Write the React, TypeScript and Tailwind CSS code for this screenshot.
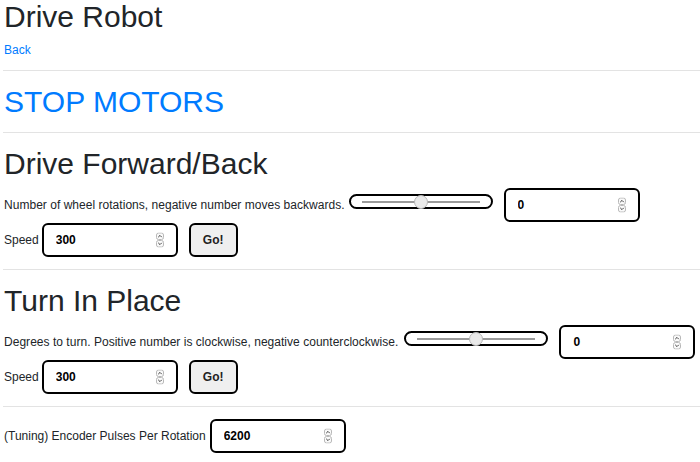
import { useState } from "react";

const sliderCls =
  "appearance-none bg-white w-[144px] h-[15px] border-2 border-black rounded-full px-[11px] box-border cursor-pointer " +
  "[&::-webkit-slider-runnable-track]:h-[2px] [&::-webkit-slider-runnable-track]:bg-[#9a9a9a] " +
  "[&::-webkit-slider-thumb]:appearance-none [&::-webkit-slider-thumb]:w-[14px] [&::-webkit-slider-thumb]:h-[14px] " +
  "[&::-webkit-slider-thumb]:rounded-full [&::-webkit-slider-thumb]:bg-[#e9e9e9] [&::-webkit-slider-thumb]:border " +
  "[&::-webkit-slider-thumb]:border-[#b5b5b5] [&::-webkit-slider-thumb]:mt-[-6px]";

const numCls =
  "w-[136px] h-[34px] border-2 border-black rounded-md bg-white pl-3 pr-3 text-[12px] font-bold text-black outline-none " +
  "[&::-webkit-inner-spin-button]:appearance-none";

const goCls =
  "w-[49px] h-[34px] border-2 border-black rounded-md bg-[#efefef] text-[12px] font-bold text-[#222]";

function Spinner() {
  return (
    <svg className="absolute right-[14px] top-1/2 -translate-y-1/2 pointer-events-none" width="8" height="15" viewBox="0 0 8 15">
      <rect x="0.5" y="0.5" width="7" height="6.5" rx="2" fill="#fafafa" stroke="#b8b8b8" />
      <rect x="0.5" y="8" width="7" height="6.5" rx="2" fill="#fafafa" stroke="#b8b8b8" />
      <path d="M2.2 4.7 L4 2.9 L5.8 4.7" fill="none" stroke="#444" strokeWidth="1" />
      <path d="M2.2 10.3 L4 12.1 L5.8 10.3" fill="none" stroke="#444" strokeWidth="1" />
    </svg>
  );
}

function NumberBox({ value, defaultValue, onChange, className = "" }: {
  value?: number;
  defaultValue?: number;
  onChange?: (v: number) => void;
  className?: string;
}) {
  return (
    <span className={"relative inline-flex " + className}>
      <input
        type="number"
        value={value}
        defaultValue={defaultValue}
        onChange={onChange ? (e) => onChange(Number(e.target.value)) : undefined}
        className={numCls}
      />
      <Spinner />
    </span>
  );
}

function Rule() {
  return <div className="border-t border-[#e3e3e3] -ml-px" />;
}

function Heading({ children, className = "" }: { children: React.ReactNode; className?: string }) {
  return <h2 className={"text-[30px] leading-[34px] font-normal text-[#212529] " + className}>{children}</h2>;
}

function DriveSection({ title, label, sliderMin, sliderMax, sliderGap }: {
  title: string;
  label: string;
  sliderMin: number;
  sliderMax: number;
  sliderGap: string;
}) {
  const [amount, setAmount] = useState(0);
  return (
    <div>
      <Heading className="mt-[14px]">{title}</Heading>
      <div className="flex items-baseline mt-[7px] whitespace-nowrap">
        <span className="tracking-[0.03px]">{label}</span>
        <input
          type="range"
          min={sliderMin}
          max={sliderMax}
          value={amount}
          onChange={(e) => setAmount(Number(e.target.value))}
          className={sliderCls + " " + sliderGap}
        />
        <NumberBox value={amount} onChange={setAmount} className="ml-[11px]" />
      </div>
      <div className="flex items-baseline mt-px">
        <span>Speed</span>
        <NumberBox defaultValue={300} className="ml-[3px]" />
        <button className={goCls + " ml-[11px]"}>Go!</button>
      </div>
    </div>
  );
}

export default function App() {
  return (
    <div className="pl-1 text-[12px] leading-[18px] text-[#212529] font-['Liberation_Sans',Arial,sans-serif] bg-white min-h-[462px] overflow-hidden">
      <Heading>Drive Robot</Heading>
      <a href="#" className="block mt-[7px] text-[#007bff]">Back</a>
      <div className="mt-[11px]">
        <Rule />
      </div>

      <button className="block mt-[14px] text-[30px] leading-[34px] text-[#007bff]">STOP MOTORS</button>
      <div className="mt-[13px]">
        <Rule />
      </div>

      <DriveSection
        title="Drive Forward/Back"
        label="Number of wheel rotations, negative number moves backwards."
        sliderMin={-10}
        sliderMax={10}
        sliderGap="ml-1"
      />
      <div className="mt-[12px]">
        <Rule />
      </div>

      <DriveSection
        title="Turn In Place"
        label="Degrees to turn. Positive number is clockwise, negative counterclockwise."
        sliderMin={-360}
        sliderMax={360}
        sliderGap="ml-[6px]"
      />
      <div className="mt-[12px]">
        <Rule />
      </div>

      <div className="flex items-baseline mt-3">
        <span>(Tuning) Encoder Pulses Per Rotation</span>
        <NumberBox defaultValue={6200} className="ml-1" />
      </div>
    </div>
  );
}
